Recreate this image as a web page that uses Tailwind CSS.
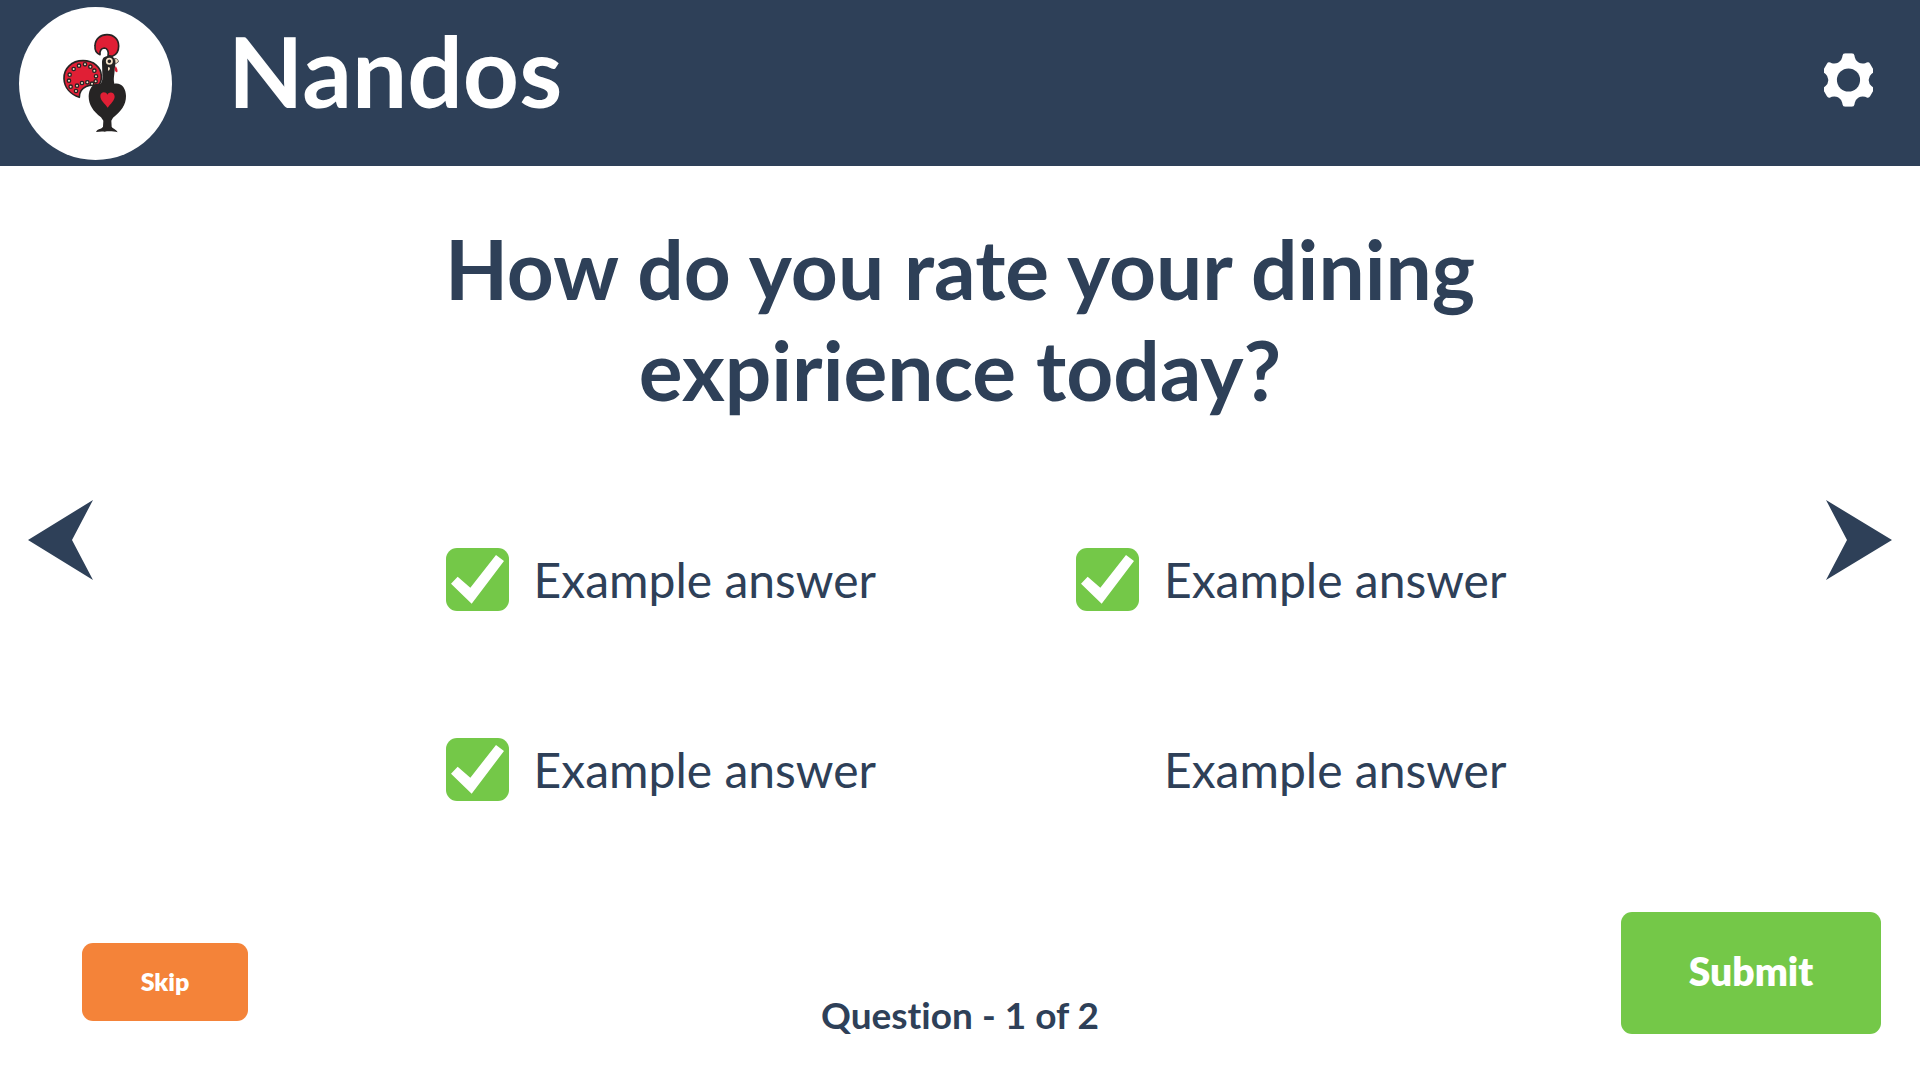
<!DOCTYPE html>
<html lang="en">
<head>
<meta charset="utf-8">
<meta name="viewport" content="width=device-width, initial-scale=1">
<title>Nandos</title>
<script src="https://cdn.jsdelivr.net/npm/@tailwindcss/browser@4"></script>
</head>
<body class="flex min-h-screen flex-col bg-white font-['Lato','Open_Sans',sans-serif] text-[#2e4058] [font-variant-ligatures:none]">

<header class="flex h-[166px] shrink-0 items-center bg-[#2e4058] pr-[47px] pl-[19px] text-white">
  <svg class="size-[153px] shrink-0" viewBox="0 0 459 459" role="img" aria-label="Rooster logo">
    <circle cx="229.500" cy="229.500" r="229.500" fill="#fff"/>
    <g transform="translate(93 55)" stroke-linejoin="round">
      <!-- comb -->
      <path d="M150 88 C139 84 134 74 135 61 C136 41 151 28 171 28 C192 28 206 42 206 62 C206 77 200 88 187 93 L174 91 C177 79 172 68 163 68 C154 69 149 77 150 88Z" fill="#e01f35" stroke="#262424" stroke-width="5"/>
      <!-- tail -->
      <path d="M88 216 C62 207 43 187 42 160 C41 129 65 106 99 106 C132 106 153 126 154 151 C155 164 151 175 144 182 C124 176 88 181 88 216Z" fill="#e01f35" stroke="#262424" stroke-width="5"/>
      <g fill="#f6e3c8" stroke="#262424" stroke-width="4">
        <circle cx="62" cy="184" r="5"/><circle cx="57" cy="166" r="5"/><circle cx="59" cy="148" r="5"/><circle cx="71" cy="131" r="5"/><circle cx="87" cy="121" r="5"/><circle cx="105" cy="117" r="5"/><circle cx="121" cy="124" r="5"/><circle cx="133" cy="136" r="5"/><circle cx="138" cy="153" r="5"/><circle cx="137" cy="168" r="5"/><circle cx="126" cy="175" r="5"/><circle cx="112" cy="171" r="5"/><circle cx="96" cy="173" r="5"/><circle cx="81" cy="181" r="5"/><circle cx="78" cy="197" r="5"/>
      </g>
      <!-- neck, body and foot -->
      <path d="M156 112 C156 98 163 92 176 92 C189 92 197 98 196 113 L193 145 C191 158 191 166 193 175 C214 171 228 188 228 212 C228 238 214 258 189 277 L184 286 L185 304 C188 311 198 310 203 321 C190 317 174 317 164 319 C154 318 147 319 138 320 C142 309 155 312 159 304 L160 286 L153 276 C129 258 116 238 116 213 C117 188 130 171 151 176 C158 168 158 158 157 145Z" fill="#262424"/>
      <circle cx="178" cy="108" r="8" fill="#262424" stroke="#f6e3c8" stroke-width="5"/>
      <path d="M194 99 C201 99 206 104 205 110 L196 116Z" fill="#f6e3c8" stroke="#262424" stroke-width="2"/>
      <path d="M174 125 L180 127 C180 132 177 136 174 136Z" fill="#f6e3c8"/>
      <path d="M197 122 C201 128 205 137 201 141 C196 141 194 134 194 130Z" fill="#e01f35"/>
      <!-- heart -->
      <path d="M172 208 C177 197 194 200 194 214 C194 224 182 235 173 247 C165 235 151 226 151 212 C151 199 168 197 172 208Z" fill="#e01f35"/>
    </g>
  </svg>
  <h1 class="ml-14 pb-[27px] text-[98px] leading-none font-bold">Nandos</h1>
  <button type="button" aria-label="Settings" class="mb-1.5 ml-auto">
    <svg class="h-[54px] w-[49px]" viewBox="0 0 148 162" fill="currentColor" aria-hidden="true">
      <defs>
        <mask id="hub"><rect width="148" height="162" fill="#fff"/><circle cx="74" cy="81" r="35" fill="#000"/></mask>
        <path id="tooth" d="M56 7 Q57 0 64 0 H84 Q91 0 92 7 L93 12 Q94 21 105 29 L74 83 L43 29 Q54 21 55 12Z"/>
      </defs>
      <g mask="url(#hub)">
        <circle cx="74" cy="81" r="59"/>
        <use href="#tooth"/>
        <use href="#tooth" transform="rotate(60 74 81)"/>
        <use href="#tooth" transform="rotate(120 74 81)"/>
        <use href="#tooth" transform="rotate(180 74 81)"/>
        <use href="#tooth" transform="rotate(240 74 81)"/>
        <use href="#tooth" transform="rotate(300 74 81)"/>
      </g>
    </svg>
  </button>
</header>

<main class="flex grow flex-col">
  <h2 id="question" class="mx-auto mt-[52px] max-w-[1100px] text-center text-[82px] leading-[101px] font-bold">How do you rate your dining expirience today?</h2>

  <div class="mt-20 flex items-start justify-between px-7">
    <button type="button" aria-label="Previous question">
      <svg class="h-20 w-[66px]" viewBox="0 0 66 80" fill="currentColor" aria-hidden="true"><path d="M0 40 L65 0 L44 40 L65 80Z"/></svg>
    </button>

    <div role="group" aria-labelledby="question" class="mt-12 ml-8 grid grid-cols-[auto_auto] gap-x-[200px] gap-y-[127px] text-[48px] leading-[63px]">
      <label class="flex items-center gap-[25px]">
        <span class="grid size-[63px] shrink-0">
          <input type="checkbox" checked class="peer col-start-1 row-start-1 size-full appearance-none rounded-[11px] checked:bg-[#74c848]">
          <svg class="pointer-events-none col-start-1 row-start-1 size-full text-white opacity-0 peer-checked:opacity-100" viewBox="0 0 189 189" fill="currentColor" aria-hidden="true"><path d="M15 107 L35 86 L73 119 L150 21 L174 39 L77 167Z"/></svg>
        </span>
        Example answer
      </label>
      <label class="flex items-center gap-[25px]">
        <span class="grid size-[63px] shrink-0">
          <input type="checkbox" checked class="peer col-start-1 row-start-1 size-full appearance-none rounded-[11px] checked:bg-[#74c848]">
          <svg class="pointer-events-none col-start-1 row-start-1 size-full text-white opacity-0 peer-checked:opacity-100" viewBox="0 0 189 189" fill="currentColor" aria-hidden="true"><path d="M15 107 L35 86 L73 119 L150 21 L174 39 L77 167Z"/></svg>
        </span>
        Example answer
      </label>
      <label class="flex items-center gap-[25px]">
        <span class="grid size-[63px] shrink-0">
          <input type="checkbox" checked class="peer col-start-1 row-start-1 size-full appearance-none rounded-[11px] checked:bg-[#74c848]">
          <svg class="pointer-events-none col-start-1 row-start-1 size-full text-white opacity-0 peer-checked:opacity-100" viewBox="0 0 189 189" fill="currentColor" aria-hidden="true"><path d="M15 107 L35 86 L73 119 L150 21 L174 39 L77 167Z"/></svg>
        </span>
        Example answer
      </label>
      <label class="flex items-center gap-[25px]">
        <span class="grid size-[63px] shrink-0">
          <input type="checkbox" class="peer col-start-1 row-start-1 size-full appearance-none rounded-[11px] checked:bg-[#74c848]">
          <svg class="pointer-events-none col-start-1 row-start-1 size-full text-white opacity-0 peer-checked:opacity-100" viewBox="0 0 189 189" fill="currentColor" aria-hidden="true"><path d="M15 107 L35 86 L73 119 L150 21 L174 39 L77 167Z"/></svg>
        </span>
        Example answer
      </label>
    </div>

    <button type="button" aria-label="Next question">
      <svg class="h-20 w-[66px]" viewBox="0 0 66 80" fill="currentColor" aria-hidden="true"><path d="M66 40 L0 0 L21 40 L0 80Z"/></svg>
    </button>
  </div>
</main>

<footer class="grid grid-cols-[1fr_auto_1fr] items-end pb-[46px]">
  <button type="button" class="mb-[13px] ml-[82px] h-[78px] w-[166px] rounded-[11px] bg-[#f48339] pb-0.5 text-[25px] leading-8 font-extrabold text-white">Skip</button>
  <p class="text-[37px] leading-[38px] font-bold">Question - 1 of 2</p>
  <button type="submit" class="mr-[39px] h-[122px] w-[260px] justify-self-end rounded-[11px] bg-[#74c848] pb-1 text-[39px] leading-[48px] font-extrabold text-white">Submit</button>
</footer>

</body>
</html>
